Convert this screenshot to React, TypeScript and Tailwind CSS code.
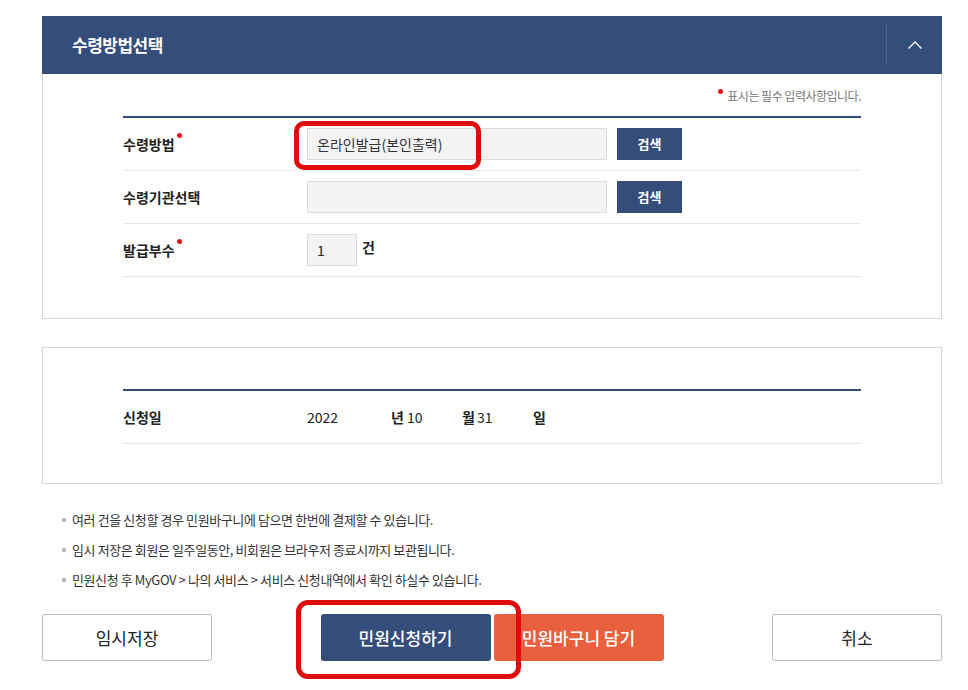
import React from 'react'

const font = { fontFamily: '"Noto Sans CJK KR", "Noto Sans", sans-serif' }

function RequiredDot() {
  return <span className="inline-block w-[5px] h-[5px] rounded-full bg-[#e3141b] relative -top-[9px] ml-[2px]" />
}

function SearchButton() {
  return (
    <button className="ml-[10px] w-[65px] h-[32px] bg-[#354d7a] text-white text-[13px] font-bold">
      검색
    </button>
  )
}

export default function App() {
  const notes = [
    '여러 건을 신청할 경우 민원바구니에 담으면 한번에 결제할 수 있습니다.',
    '임시 저장은 회원은 일주일동안, 비회원은 브라우저 종료시까지 보관됩니다.',
    '민원신청 후 MyGOV > 나의 서비스 > 서비스 신청내역에서 확인 하실수 있습니다.',
  ]

  return (
    <div className="relative w-[968px] min-h-[690px] bg-white text-[#222]" style={font}>
      <div className="ml-[42px] w-[900px] pt-[16px]">
        {/* Header */}
        <div className="h-[58px] bg-[#354d7a] flex items-center">
          <h2 className="flex-1 pl-[30px] text-white text-[17px] font-bold tracking-[-0.5px]">수령방법선택</h2>
          <div className="w-px h-[40px] bg-[#4d6392]" />
          <div className="w-[55px] flex justify-center">
            <svg width="16" height="10" viewBox="0 0 16 10" fill="none">
              <polyline points="1.5,8.5 8,2 14.5,8.5" stroke="white" strokeWidth="1.4" />
            </svg>
          </div>
        </div>

        {/* Panel 1 */}
        <div className="border border-t-0 border-[#d6d6d6] px-[80px] pt-[12px] pb-[41px]">
          <div className="h-[20px] flex items-center justify-end text-[12px] text-[#777] tracking-[-0.5px]">
            <span className="inline-block w-[5px] h-[5px] rounded-full bg-[#e3141b] relative -top-[5px] mr-[4px]" />
            표시는 필수 입력사항입니다.
          </div>
          <div className="mt-[10px] border-t-2 border-[#354d7a]">
            <div className="h-[53px] border-b border-[#e8e8e8] flex items-center">
              <div className="w-[184px] text-[14px] font-bold flex items-center">
                수령방법<RequiredDot />
              </div>
              <div className="w-[300px] h-[32px] bg-[#f3f3f3] border border-[#dcdcdc] flex items-center pl-[9px] text-[14px] text-[#333]">
                온라인발급(본인출력)
              </div>
              <SearchButton />
            </div>
            <div className="h-[53px] border-b border-[#e8e8e8] flex items-center">
              <div className="w-[184px] text-[14px] font-bold">수령기관선택</div>
              <div className="w-[300px] h-[32px] bg-[#f3f3f3] border border-[#dcdcdc]" />
              <SearchButton />
            </div>
            <div className="h-[53px] border-b border-[#e8e8e8] flex items-center">
              <div className="w-[184px] text-[14px] font-bold flex items-center">
                발급부수<RequiredDot />
              </div>
              <div className="w-[50px] h-[32px] bg-[#f3f3f3] border border-[#dcdcdc] flex items-center pl-[9px] text-[14px]">
                1
              </div>
              <span className="ml-[5px] text-[14px] font-bold -mt-[6px]">건</span>
            </div>
          </div>
        </div>

        {/* Panel 2 */}
        <div className="mt-[28px] border border-[#d6d6d6] px-[80px] pt-[41px] pb-[39px]">
          <div className="border-t-2 border-[#354d7a]">
            <div className="h-[53px] border-b border-[#e8e8e8] flex items-center text-[14px]">
              <div className="w-[184px] font-bold">신청일</div>
              <span className="w-[84px]">2022</span>
              <span className="w-[16px] font-bold">년</span>
              <span className="w-[55px]">10</span>
              <span className="w-[15px] font-bold">월</span>
              <span className="w-[56px]">31</span>
              <span className="font-bold">일</span>
            </div>
          </div>
        </div>

        {/* Notes */}
        <ul className="mt-[21px] pl-[20px] text-[13px] text-[#333] tracking-[-0.4px]">
          {notes.map((n) => (
            <li key={n} className="h-[30px] flex items-center">
              <span className="w-[4px] h-[4px] bg-[#bbb] mr-[6px]" />
              {n}
            </li>
          ))}
        </ul>

        {/* Buttons */}
        <div className="mt-[19px] flex justify-between">
          <button className="w-[170px] h-[47px] border border-[#bbb] rounded-[3px] text-[17px] text-[#222]">임시저장</button>
          <div className="flex gap-[3px]">
            <button className="w-[170px] h-[47px] bg-[#354d7a] rounded-[3px] text-[17px] font-medium text-white">민원신청하기</button>
            <button className="w-[170px] h-[47px] bg-[#e9603f] rounded-[3px] text-[17px] font-medium text-white">민원바구니 담기</button>
          </div>
          <button className="w-[170px] h-[47px] border border-[#bbb] rounded-[3px] text-[17px] text-[#222]">취소</button>
        </div>
      </div>

      {/* Annotation highlights */}
      <div className="absolute left-[294px] top-[121px] w-[187px] h-[49px] border-[5px] border-[#e00c0c] rounded-[10px]" />
      <div className="absolute left-[296px] top-[600px] w-[225px] h-[79px] border-[5px] border-[#e00c0c] rounded-[12px]" />
    </div>
  )
}
